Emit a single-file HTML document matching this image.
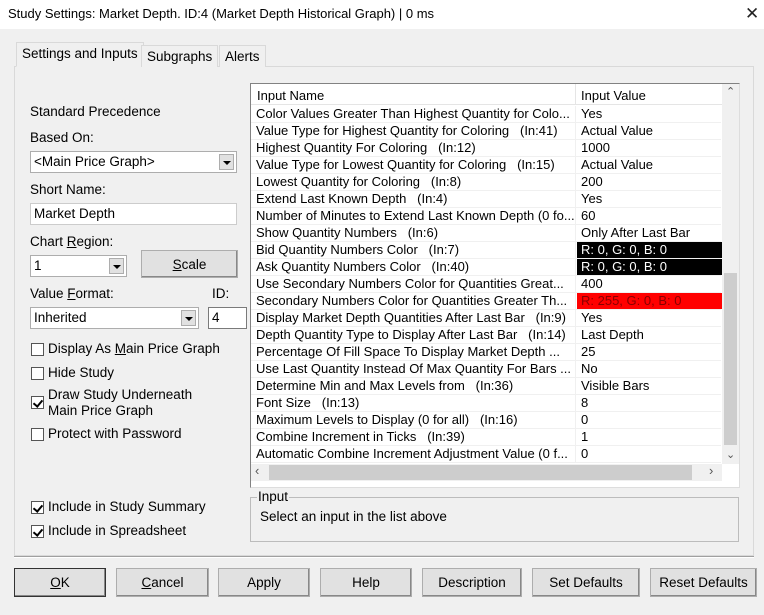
<!DOCTYPE html>
<html><head><meta charset="utf-8"><style>
*{box-sizing:border-box;margin:0;padding:0}
body{width:764px;height:615px;background:#f0f0f0;font-family:"Liberation Sans",sans-serif;font-size:13px;color:#000;position:relative;overflow:hidden}
.a{position:absolute;white-space:nowrap}
.title{left:0;top:0;width:764px;height:29px;background:#fff}
.panel{left:14px;top:66px;width:740px;height:490px;border:1px solid #d9d9d9;background:#f0f0f0}
.tab{top:45px;height:22px;border:1px solid #d9d9d9;border-bottom:none;background:#f0f0f0;padding:3px 5px 0;font-size:13.5px}
.combo{background:#fff;border:1px solid #adadad;padding:2px 3px;font-size:13.5px;height:22px}
.dd{position:absolute;right:2px;top:2px;width:15px;height:16px;background:#e1e1e1;border:1px solid #adadad}
.dd:after{content:"";position:absolute;left:3px;top:6px;border-left:4px solid transparent;border-right:4px solid transparent;border-top:4px solid #000}
.lbl{font-size:13.5px}
.cb{width:13px;height:13px;border:1px solid #555;background:#fff}
.chk:after{content:"";position:absolute;left:3px;top:1px;width:4px;height:7px;border-right:2px solid #000;border-bottom:2px solid #000;transform:rotate(40deg)}
.btn{background:#e1e1e1;border:1px solid #adadad;text-align:center;line-height:27px;font-size:13.5px;height:29px;box-shadow:inset -1px -1px 0 #888}
.row{position:absolute;left:0;width:470px;height:17px;border-bottom:1px solid #f0f0f0;font-size:13px;line-height:16px}
.row .n{position:absolute;left:5px}
.row .v{position:absolute;left:326px;width:146px;height:16px;padding-left:4px}
</style></head><body>
<div class="a title"></div>
<div class="a" style="left:8px;top:6px;font-size:13px">Study Settings: Market Depth. ID:4 (Market Depth Historical Graph) | 0 ms</div>
<div class="a" style="left:745px;top:4px;font-size:17px;font-weight:300;color:#222">✕</div>
<div class="a panel"></div>
<div class="a tab" style="left:16px;top:42px;height:25px;border-bottom:1px solid #f0f0f0">Settings and Inputs</div>
<div class="a tab" style="left:141px">Subgraphs</div>
<div class="a tab" style="left:219px">Alerts</div>

<div class="a lbl" style="left:30px;top:104px">Standard Precedence</div>
<div class="a lbl" style="left:30px;top:130px">Based On:</div>
<div class="a combo" style="left:30px;top:151px;width:207px">&lt;Main Price Graph&gt;<div class="dd"></div></div>
<div class="a lbl" style="left:30px;top:182px">Short Name:</div>
<div class="a combo" style="left:30px;top:203px;width:207px;border-color:#ccc">Market Depth</div>
<div class="a lbl" style="left:30px;top:234px">Chart <u>R</u>egion:</div>
<div class="a combo" style="left:30px;top:255px;width:97px">1<div class="dd"></div></div>
<div class="a btn" style="left:141px;top:250px;width:97px;height:28px"><u>S</u>cale</div>
<div class="a lbl" style="left:30px;top:286px">Value <u>F</u>ormat:</div>
<div class="a lbl" style="left:212px;top:286px">ID:</div>
<div class="a combo" style="left:30px;top:307px;width:169px">Inherited<div class="dd"></div></div>
<div class="a combo" style="left:208px;top:307px;width:39px;border-color:#7a7a7a">4</div>
<div class="a cb" style="left:31px;top:343px"></div><div class="a lbl" style="left:48px;top:341px">Display As <u>M</u>ain Price Graph</div>
<div class="a cb" style="left:31px;top:367px"></div><div class="a lbl" style="left:48px;top:365px">Hide Study</div>
<div class="a cb chk" style="left:31px;top:396px"></div><div class="a lbl" style="left:48px;top:387px;line-height:16px">Draw Study Underneath<br>Main Price Graph</div>
<div class="a cb" style="left:31px;top:428px"></div><div class="a lbl" style="left:48px;top:426px">Protect with Password</div>
<div class="a cb chk" style="left:31px;top:501px"></div><div class="a lbl" style="left:48px;top:499px">Include in Study Summary</div>
<div class="a cb chk" style="left:31px;top:525px"></div><div class="a lbl" style="left:48px;top:523px">Include in Spreadsheet</div>

<div class="a" style="left:250px;top:83px;width:490px;height:405px;border:1px solid #828282;border-right-color:#ddd;border-bottom-color:#ddd;background:#fff;overflow:hidden">
 <div class="a" style="left:0;top:0;width:471px;height:21px;border-bottom:1px solid #e5e5e5;font-size:13px">
  <div class="a" style="left:6px;top:4px">Input Name</div>
  <div class="a" style="left:324px;top:0;width:1px;height:21px;background:#e5e5e5"></div>
  <div class="a" style="left:330px;top:4px">Input Value</div>
 </div>
 <div class="a" style="left:0;top:22px;width:471px;height:358px">
  <div class="row" style="top:0"><span class="n">Color Values Greater Than Highest Quantity for Colo...</span><span class="v">Yes</span></div>
  <div class="row" style="top:17px"><span class="n">Value Type for Highest Quantity for Coloring &nbsp;&nbsp;(In:41)</span><span class="v">Actual Value</span></div>
  <div class="row" style="top:34px"><span class="n">Highest Quantity For Coloring &nbsp;&nbsp;(In:12)</span><span class="v">1000</span></div>
  <div class="row" style="top:51px"><span class="n">Value Type for Lowest Quantity for Coloring &nbsp;&nbsp;(In:15)</span><span class="v">Actual Value</span></div>
  <div class="row" style="top:68px"><span class="n">Lowest Quantity for Coloring &nbsp;&nbsp;(In:8)</span><span class="v">200</span></div>
  <div class="row" style="top:85px"><span class="n">Extend Last Known Depth &nbsp;&nbsp;(In:4)</span><span class="v">Yes</span></div>
  <div class="row" style="top:102px"><span class="n">Number of Minutes to Extend Last Known Depth (0 fo...</span><span class="v">60</span></div>
  <div class="row" style="top:119px"><span class="n">Show Quantity Numbers &nbsp;&nbsp;(In:6)</span><span class="v">Only After Last Bar</span></div>
  <div class="row" style="top:136px"><span class="n">Bid Quantity Numbers Color &nbsp;&nbsp;(In:7)</span><span class="v" style="background:#000;color:#fff">R: 0, G: 0, B: 0</span></div>
  <div class="row" style="top:153px"><span class="n">Ask Quantity Numbers Color &nbsp;&nbsp;(In:40)</span><span class="v" style="background:#000;color:#fff">R: 0, G: 0, B: 0</span></div>
  <div class="row" style="top:170px"><span class="n">Use Secondary Numbers Color for Quantities Great...</span><span class="v">400</span></div>
  <div class="row" style="top:187px"><span class="n">Secondary Numbers Color for Quantities Greater Th...</span><span class="v" style="background:#f00;color:#800">R: 255, G: 0, B: 0</span></div>
  <div class="row" style="top:204px"><span class="n">Display Market Depth Quantities After Last Bar &nbsp;&nbsp;(In:9)</span><span class="v">Yes</span></div>
  <div class="row" style="top:221px"><span class="n">Depth Quantity Type to Display After Last Bar &nbsp;&nbsp;(In:14)</span><span class="v">Last Depth</span></div>
  <div class="row" style="top:238px"><span class="n">Percentage Of Fill Space To Display Market Depth ...</span><span class="v">25</span></div>
  <div class="row" style="top:255px"><span class="n">Use Last Quantity Instead Of Max Quantity For Bars ...</span><span class="v">No</span></div>
  <div class="row" style="top:272px"><span class="n">Determine Min and Max Levels from &nbsp;&nbsp;(In:36)</span><span class="v">Visible Bars</span></div>
  <div class="row" style="top:289px"><span class="n">Font Size &nbsp;&nbsp;(In:13)</span><span class="v">8</span></div>
  <div class="row" style="top:306px"><span class="n">Maximum Levels to Display (0 for all) &nbsp;&nbsp;(In:16)</span><span class="v">0</span></div>
  <div class="row" style="top:323px"><span class="n">Combine Increment in Ticks &nbsp;&nbsp;(In:39)</span><span class="v">1</span></div>
  <div class="row" style="top:340px"><span class="n">Automatic Combine Increment Adjustment Value (0 f...</span><span class="v">0</span></div>
  <div class="a" style="left:324px;top:0;width:1px;height:357px;background:#f0f0f0"></div>
 </div>
 <div class="a" style="left:471px;top:0;width:17px;height:380px;background:#f0f0f0"></div>
 <div class="a" style="left:473px;top:189px;width:13px;height:172px;background:#cdcdcd"></div>
 <div class="a" style="left:475px;top:1px;font-size:11px;color:#555">&#8963;</div>
 <div class="a" style="left:475px;top:364px;font-size:11px;color:#555">&#8964;</div>
 <div class="a" style="left:0;top:380px;width:471px;height:17px;background:#f0f0f0"></div>
 <div class="a" style="left:18px;top:381px;width:423px;height:15px;background:#cdcdcd"></div>
 <div class="a" style="left:4px;top:379px;font-size:13px;color:#555">&lsaquo;</div>
 <div class="a" style="left:458px;top:379px;font-size:13px;color:#555">&rsaquo;</div>
</div>

<div class="a" style="left:250px;top:497px;width:489px;height:45px;border:1px solid #bcbcbc"></div>
<div class="a lbl" style="left:257px;top:489px;background:#f0f0f0;padding:0 1px">Input</div>
<div class="a lbl" style="left:260px;top:509px">Select an input in the list above</div>

<div class="a" style="left:14px;top:556px;width:740px;height:2px;border-top:1px solid #a0a0a0;border-bottom:1px solid #fff"></div>
<div class="a btn" style="left:14px;top:568px;width:92px;border:1px solid #333"><u>O</u>K</div>
<div class="a btn" style="left:116px;top:568px;width:93px"><u>C</u>ancel</div>
<div class="a btn" style="left:218px;top:568px;width:92px">Apply</div>
<div class="a btn" style="left:320px;top:568px;width:92px">Help</div>
<div class="a btn" style="left:422px;top:568px;width:100px">Description</div>
<div class="a btn" style="left:532px;top:568px;width:108px">Set Defaults</div>
<div class="a btn" style="left:650px;top:568px;width:107px">Reset Defaults</div>
</body></html>
